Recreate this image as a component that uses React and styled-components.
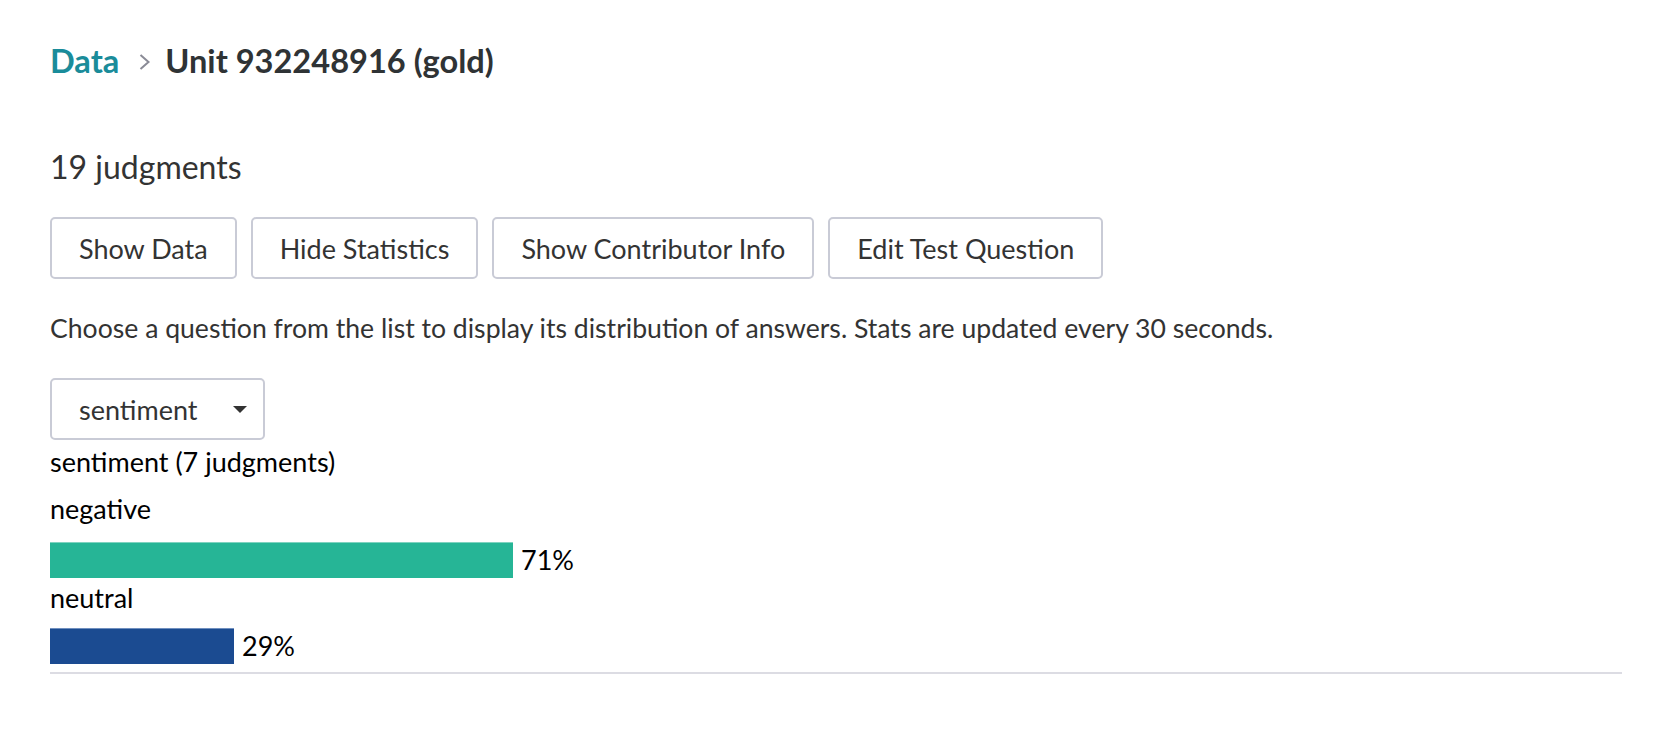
import React from "react";
import styled, { createGlobalStyle } from "styled-components";

const GlobalStyle = createGlobalStyle`
  body {
    margin: 0;
    background: #ffffff;
    font-family: Lato, "Noto Sans", sans-serif;
    color: #333333;
  }
`;

const Page = styled.div`
  padding: 42px 40px 0 50px;
`;

const Breadcrumb = styled.div`
  display: flex;
  align-items: center;
  font-size: 32.6px;
  font-weight: 700;
  line-height: 38px;
`;

const CrumbLink = styled.a`
  color: #1a8c9a;
  text-decoration: none;
`;

const Chevron = styled.svg`
  width: 13px;
  height: 16px;
  margin: 2px 14px 0 19px;
`;

const CrumbCurrent = styled.span`
  color: #2f3335;
`;

const Count = styled.div`
  margin-top: 68px;
  font-size: 32px;
  line-height: 38px;
`;

const Toolbar = styled.div`
  display: flex;
  gap: 14px;
  margin-top: 31px;
`;

const Button = styled.button`
  box-sizing: border-box;
  height: 62px;
  padding: 0 27px;
  border: 2px solid #c9cbd6;
  border-radius: 5px;
  background: #ffffff;
  font-family: Lato, "Noto Sans", sans-serif;
  font-size: 27px;
  color: #333333;
  cursor: pointer;
`;

const Hint = styled.p`
  margin: 33px 0 0;
  font-size: 26.6px;
  line-height: 32px;
`;

const Select = styled.div`
  box-sizing: border-box;
  display: flex;
  align-items: center;
  justify-content: space-between;
  width: 215px;
  height: 62px;
  margin-top: 34px;
  padding: 0 16px 0 27px;
  border: 2px solid #c9cbd6;
  border-radius: 5px;
  font-size: 27px;
  color: #333333;
`;

const Caret = styled.span`
  width: 0;
  height: 0;
  border-left: 7px solid transparent;
  border-right: 7px solid transparent;
  border-top: 7px solid #333333;
`;

const Stats = styled.div`
  margin-top: 6px;
  padding-bottom: 8px;
  border-bottom: 2px solid #dcdce3;
  color: #000000;
  font-size: 27px;
`;

const StatTitle = styled.div`
  line-height: 32px;
`;

const AnswerLabel = styled.div`
  line-height: 32px;
  margin-top: ${(p) => p.$gap}px;
`;

const BarRow = styled.div`
  display: flex;
  align-items: center;
  gap: 8px;
  margin-top: ${(p) => p.$gap}px;
  height: 36px;
`;

const Bar = styled.div`
  height: 36px;
  background: ${(p) => p.$color};
  border-top: 1px solid ${(p) => p.$edge};
  box-sizing: border-box;
`;

const Percent = styled.span`
  line-height: 36px;
`;

const answers = [
  { label: "negative", pct: 71, width: 463, color: "#26b596", edge: "#7fd3c0", labelGap: 15, barGap: 17 },
  { label: "neutral", pct: 29, width: 184, color: "#1b4b91", edge: "#6f8fbf", labelGap: 4, barGap: 14 },
];

export default function App() {
  return (
    <Page>
      <GlobalStyle />
      <Breadcrumb>
        <CrumbLink href="#">Data</CrumbLink>
        <Chevron viewBox="0 0 13 16">
          <path d="M2.5 1 L10.5 8 L2.5 15" fill="none" stroke="#8a8b96" strokeWidth="2" />
        </Chevron>
        <CrumbCurrent>Unit 932248916 (gold)</CrumbCurrent>
      </Breadcrumb>
      <Count>19 judgments</Count>
      <Toolbar>
        <Button>Show Data</Button>
        <Button>Hide Statistics</Button>
        <Button>Show Contributor Info</Button>
        <Button>Edit Test Question</Button>
      </Toolbar>
      <Hint>
        Choose a question from the list to display its distribution of answers. Stats are updated every 30 seconds.
      </Hint>
      <Select>
        sentiment
        <Caret />
      </Select>
      <Stats>
        <StatTitle>sentiment (7 judgments)</StatTitle>
        {answers.map((a) => (
          <React.Fragment key={a.label}>
            <AnswerLabel $gap={a.labelGap}>{a.label}</AnswerLabel>
            <BarRow $gap={a.barGap}>
              <Bar $color={a.color} $edge={a.edge} style={{ width: a.width }} />
              <Percent>{a.pct}%</Percent>
            </BarRow>
          </React.Fragment>
        ))}
      </Stats>
    </Page>
  );
}
